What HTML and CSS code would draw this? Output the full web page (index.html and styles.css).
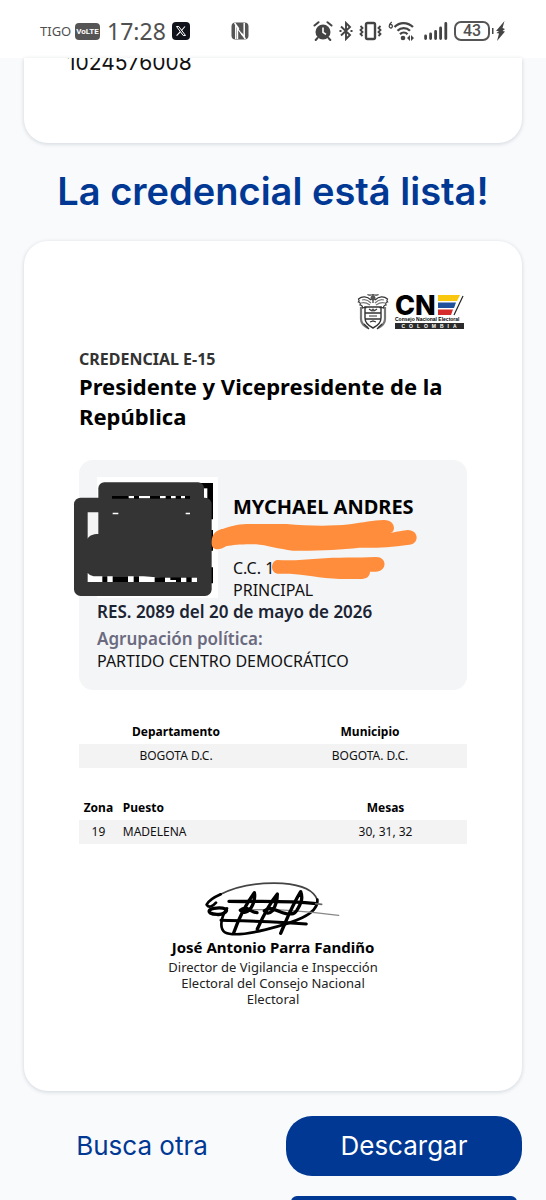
FILE: index.html
```html
<!DOCTYPE html>
<html lang="es">
<head>
<meta charset="utf-8">
<meta name="viewport" content="width=device-width, initial-scale=1">
<title>Credencial E-15</title>
<link rel="stylesheet" href="styles.css">
</head>
<body>
<div class="screen">
  <header class="status">
    <div class="status-left">
      <span class="carrier">TIGO</span>
      <span class="volte">VoLTE</span>
      <span class="clock">17:28</span>
      <svg class="app-x" width="18" height="18" viewBox="0 0 18 18"><rect width="18" height="18" rx="4" fill="#10141a"/><path d="M4.5 4.5h2.3l6.7 9h-2.3z" fill="none" stroke="#fff" stroke-width="1"/><path d="M13 4.5l-3.6 4M8.2 9.8l-3.6 3.8" stroke="#fff" stroke-width="1.1"/></svg>
      <svg width="18" height="18" viewBox="0 0 18 18"><rect x=".5" y=".5" width="17" height="17" rx="4" fill="#555"/><path d="M4.800 17V2.500M13.200 15.500V1M3.600 1l4.200 6M14.400 17l-4.200-6" fill="none" stroke="#fff" stroke-width="1.500"/><path d="M6.600 17V6.500l5 7" fill="none" stroke="#fff" stroke-width="1.200"/></svg>
    </div>
    <div class="status-right">
      <svg width="20" height="20" viewBox="0 0 20 20"><circle cx="10" cy="11" r="7.500" fill="#444"/><path d="M1.500 4.500l4-3.300M18.500 4.500l-4-3.300M4.500 17l-1.800 2M15.500 17l1.800 2" stroke="#444" stroke-width="2" stroke-linecap="round"/><path d="M10 6.500v4.800l3 2" fill="none" stroke="#fff" stroke-width="1.600"/></svg>
      <svg width="14" height="20" viewBox="0 0 14 20" fill="none" stroke="#444" stroke-width="1.900"><path d="M2 5.500l9 8.500-4 4V2l4 4-9 8.500"/><path d="M.5 10h2M11.500 10h2"/></svg>
      <svg width="23" height="20" viewBox="0 0 23 20" fill="none" stroke="#444" stroke-width="2.400"><rect x="7" y="2" width="9" height="16" rx="1.500"/><path d="M1.500 5l2 2-2 2 2 2-2 2 2 2M21.500 5l-2 2 2 2-2 2 2 2-2 2" stroke-width="1.800"/></svg>
      <svg width="27" height="20" viewBox="0 0 27 20" fill="none" stroke="#444" stroke-width="2.300"><path d="M3.700 1C1.800 2.500 1.200 4 1.200 5.500a1.600 1.800 0 1 0 .3-1.400" stroke-width="1.300"/><path d="M6.500 6c5-5.300 13-5.300 18.500 0M9.500 9.700c3.500-3.500 9-3.500 12.500 0M12 13.200c2.200-2 5.500-2 7.500 0"/><circle cx="15" cy="17" r="2.300" fill="#444" stroke="none"/><path d="M22 14v6l-3-3zM23 14v6l3-3z" fill="#444" stroke="none"/></svg>
      <svg class="signal" width="24" height="20" viewBox="0 0 24 20" stroke="#444" stroke-width="2.800" stroke-linecap="round"><path d="M1.600 15v2.500M6.600 13v4.500M11.600 10.500v7M16.600 7v10.500M21.800 2.500v15"/></svg>
      <span class="battery">43</span>
      <svg class="bolt" width="14" height="20" viewBox="0 0 14 20"><path d="M0 7h1.500v6H0z" fill="#444"/><path d="M12.500 0L4 10h3l-2.500 2L7 12.500 5 20l8-9.500-2.500-.5 2.500-2-2.500-1z" fill="#444"/></svg>
    </div>
  </header>

  <main class="page">
    <section class="card previous"><p class="document">1024576008</p></section>
    <h1 class="title">La credencial está lista!</h1>

    <article class="card credential">
      <svg class="logo" width="108" height="38" viewBox="0 0 108 38" role="img" aria-label="CNE">
        <g fill="none" stroke="#333" stroke-width="1.200">
          <path d="M16 1.500c-3 1-4 1-5.500 0M16 1.500c3 1 4 1 5.500 0M16 1v9" />
          <path d="M14 7C10 3 5 3 1.500 6c1 1.500 1 2 0 3 2 .5 2 1.500 1.500 3 2 0 2.500 1 2.500 3 2-1 3-1 4 0M18 7c4-4 9-4 12.500-1-1 1.500-1 2 0 3-2 .5-2 1.500-1.500 3-2 0-2.500 1-2.500 3-2-1-3-1-4 0"/>
          <path d="M5 7c3-1 6 0 9 3M4 10c3-1 6 0 9 2M27 7c-3-1-6 0-9 3M28 10c-3-1-6 0-9 2" stroke="#777"/>
          <path d="M8 14h16v11c0 5-4 8-8 10-4-2-8-5-8-10zM8 20h16M8 26h16" stroke-width="1.400"/>
          <path d="M4 14v12c0 4 3 7 7 9M28 14v12c0 4-3 7-7 9" stroke="#777" stroke-width="2.200"/>
          <path d="M12 16l3 2M20 16l-3 2M12 23h8M13 29l3-1 3 1M7 31l5 5M25 31l-5 5"/>
        </g>
        <circle cx="16" cy="5" r="2.500" fill="#555"/><circle cx="16" cy="17" r="1.500" fill="#555"/>
        <text class="logo-cn" x="38" y="22">CN</text>
        <path d="M81 2h22l-3 6H81z" fill="#f9c80e"/><path d="M81 9.500h18l-2 5.500H81z" fill="#20509c"/><path d="M81 16.500h15l-2 5.500H81z" fill="#d62b2b"/>
        <path d="M106 3l-9 19" stroke="#222" stroke-width="1.200"/>
        <text class="logo-name" x="38" y="28">Consejo Nacional Electoral</text>
        <rect x="38" y="30" width="69" height="6" fill="#2b2b2b"/>
        <text class="logo-country" x="74" y="35" text-anchor="middle">COLOMBIA</text>
      </svg>

      <p class="kind">CREDENCIAL E-15</p>
      <h2 class="office">Presidente y Vicepresidente de la República</h2>

      <section class="holder">
        <div class="identity">
          <div class="code"></div>
          <div class="person">
            <p class="name">MYCHAEL ANDRES</p>
            <p>C.C. 1</p>
            <p>PRINCIPAL</p>
          </div>
        </div>
        <p class="resolution">RES. 2089 del 20 de mayo de 2026</p>
        <p class="party-label">Agrupación política:</p>
        <p>PARTIDO CENTRO DEMOCRÁTICO</p>
        <svg class="strokes" width="389" height="231" viewBox="0 0 389 231" aria-hidden="true">
          <g transform="translate(-19 -10) scale(.33333)">
            <path d="M410 99h49v109h-8v32h8v62h-8v50h8v48h-30z" fill="#000"/>
            <path d="M431 115h11v30h-11z" fill="#fff"/>
            <rect x="115" y="97" width="317" height="200" rx="18" fill="#343434"/>
            <rect x="42" y="143" width="413" height="295" rx="20" fill="#343434"/>
            <path d="M83 187h32v65c-17 0-27 5-32 14z" fill="#f4f4f5"/>
            <path d="M156 138h234v8H156z" fill="#000"/>
            <path d="M206 138h16v7h-16zM237 138h33v7h-33zM300 138h17v7h-17zM333 138h14v7h-14zM363 138h12v7h-12zM158 188h17v5h-17zM377 188h13v5h-13z" fill="#fff"/>
            <path d="M83 369q7 9 18 10h150l55 4h105v13H83z" fill="#fff"/>
            <path d="M127 379h15v17h-15zM158 379h46v17h-46zM221 379h16v17h-16zM284 382h31v14h-31zM331 382h17v8h-17zM348 382h15v14h-15zM379 382h16v14h-16z" fill="#000"/>
          </g>
          <g transform="translate(121 -10) scale(.33333)" fill="#ff8d3b">
            <path d="M35 282C33 252 48 240 70 236c30-10 50-14 80-14h110c60 5 120 8 190 1 40-6 70-12 100-13 35-2 40 34 21 39 20-4 40-8 52-9 35 0 35 42 5 44-60 8-100 10-150 9-60 6-120 10-200 9-40-4-80-17-110-19-40-1-65 1-90 6-20 13-42 12-43-7z"/>
            <path d="M232 330c50 2 80-1 120-4 60-5 120-2 175-5 35-1 36 43 0 44h-17c0 14-10 22-30 22h-60c-60-3-110-14-150-16h-38c-22-4-20-38 0-41z"/>
          </g>
        </svg>
      </section>

      <table class="data place">
        <thead><tr><th>Departamento</th><th>Municipio</th></tr></thead>
        <tbody><tr><td>BOGOTA D.C.</td><td>BOGOTA. D.C.</td></tr></tbody>
      </table>

      <table class="data station">
        <thead><tr><th class="zone">Zona</th><th class="post">Puesto</th><th class="tables">Mesas</th></tr></thead>
        <tbody><tr><td>19</td><td class="post">MADELENA</td><td>30, 31, 32</td></tr></tbody>
      </table>

      <footer class="signer">
        <svg width="144" height="56" viewBox="156 36 432 168" fill="none" stroke="#000" stroke-linecap="round" stroke-linejoin="round">
          <path d="M215 76c50-26 120-36 186-33 60 5 95 22 104 50" stroke="#444" stroke-width="5"/>
          <path d="M215 76c-18 8-36 18-42 31M505 92c5 45-75 70-155 90-50 12-100 20-122 8-18-12-12-45 6-72M173 107c8 12 20 3 28-6" stroke-width="8"/>
          <path d="M184 132c-16-15 30-18 46-12 10 7-13 19-26 16-18 0-28-7-22-12" stroke-width="10"/>
          <path d="M240 97c80 2 160-4 262 7" stroke-width="10"/><path d="M500 104l18 2" stroke="#666" stroke-width="5"/>
          <path d="M216 154c90 2 160 3 256 11" stroke-width="9"/>
          <path d="M285 124c90-8 190 3 284 15" stroke="#888" stroke-width="4"/>
          <path d="M254 192c15-44 35-84 62-121 3 12 0 20-2 29-8 24-25 38-40 24 20-18 31 8 50 7M325 180c18-40 35-75 60-105 0 22-5 35-14 50-12 12-20 7-25 1 18-18 38 2 65 8M395 193c18-42 35-85 60-125 7 18 3 32-12 57-7 10-14 12-23 7" stroke-width="10"/>
        </svg>
        <p class="signer-name">José Antonio Parra Fandiño</p>
        <p class="signer-role">Director de Vigilancia e Inspección Electoral del Consejo Nacional Electoral</p>
      </footer>
    </article>

    <div class="actions">
      <button class="btn plain" type="button">Busca otra</button>
      <button class="btn primary" type="button">Descargar</button>
    </div>
    <div class="next-row"></div>
  </main>
</div>
</body>
</html>
```
FILE: styles.css
```css
* { box-sizing: border-box; }

body {
  margin: 0;
  background: #f8fafc;
  color: #111;
  font-family: "Noto Sans", "Open Sans", sans-serif;
  font-size: 16px;
  line-height: 22px;
}

p, h1, h2 { margin: 0; }
svg { display: block; flex: none; }

.screen { height: 100vh; overflow: hidden; }

.status {
  display: flex;
  justify-content: space-between;
  align-items: center;
  height: 58px;
  padding: 4px 40px 0 40px;
  background: #fff;
  color: #505050;
}
.status-left, .status-right { display: flex; align-items: center; }
.status-right { gap: 6px; }
.carrier { font-size: 13px; width: 35px; }
.volte {
  width: 25px;
  border-radius: 4px;
  background: #555;
  color: #fff;
  font: 700 8px/17px Roboto, sans-serif;
  text-align: center;
}
.clock { margin-left: 7px; width: 57px; font: 400 23px/26px "Noto Sans", sans-serif; white-space: nowrap; }
.app-x { margin-left: 8px; margin-right: 41px; }
.signal { margin-left: 3px; }
.battery {
  width: 36px;
  border: 2px solid #555;
  border-radius: 7px;
  font: 500 16px/16px Roboto, sans-serif;
  text-align: center;
}
.bolt { margin-left: -4px; }

.page { padding: 0 24px; }

.card {
  background: #fff;
  border-radius: 24px;
  box-shadow: 0 1px 4px rgba(15, 23, 42, .16);
}
.previous {
  height: 85px;
  padding: 0 43px;
  border-radius: 0 0 24px 24px;
  overflow: hidden;
}
.document {
  display: flex;
  align-items: flex-end;
  height: 17px;
  font: 400 21px/24px Inter, sans-serif;
}

.title {
  padding: 24px 0 26px;
  color: #003893;
  font: 600 38px/48px Inter, sans-serif;
  text-align: center;
  white-space: nowrap;
}

.credential { padding: 52px 55px 84px; }
.logo { margin: 0 2px 16px auto; }
.logo-cn { font: 800 27px Inter, sans-serif; }
.logo-name { font: 700 5px "Liberation Sans", sans-serif; }
.logo-country { fill: #fff; font: 700 5px "Liberation Sans", sans-serif; letter-spacing: 4px; }

.kind { color: #333; font-weight: 700; font-size: 16px; line-height: 24px; }
.office { font-size: 22px; line-height: 30px; font-weight: 700; color: #000; }

.holder {
  position: relative;
  margin-top: 29px;
  padding: 17px 17px 18px 18px;
  border-radius: 14px;
  background: #f4f5f7;
}
.identity { display: flex; align-items: flex-end; gap: 15px; height: 124px; }
.code { width: 121px; height: 121px; align-self: flex-start; background: #fff; }
.name { padding-bottom: 35px; font-weight: 700; font-size: 20px; line-height: 30px; color: #000; }
.resolution { color: #1b2433; font-size: 17px; font-weight: 600; }
.party-label { margin-top: 5px; color: #6b6b80; font-size: 17px; font-weight: 600; }
.strokes { position: absolute; left: 0; top: 0; overflow: visible; }

.data {
  width: 100%;
  border-collapse: collapse;
  table-layout: fixed;
  font-size: 12px;
  line-height: 24px;
  text-align: center;
}
.data th, .data td { padding: 0; }
.data th { color: #000; font-weight: 700; }
.data tbody { background: #f3f3f4; }
.place { margin-top: 30px; }
.station { margin-top: 28px; }
.zone { width: 10%; }
.tables { width: 42%; }
.data .post { padding-left: 5px; text-align: left; }

.signer { display: flex; flex-direction: column; align-items: center; margin-top: 37px; text-align: center; }
.signer-name { color: #000; font-weight: 700; font-size: 15px; line-height: 20px; }
.signer-role { max-width: 232px; padding-top: 2px; color: #222; font-size: 13px; line-height: 16px; }

.actions { display: grid; grid-template-columns: 236px 236px; justify-content: space-between; margin-top: 25px; }
.btn {
  height: 60px;
  border: 0;
  border-radius: 26px;
  font: 400 26px/36px Inter, sans-serif;
}
.plain { background: transparent; color: #003893; }
.primary { background: #003893; color: #fff; }
.next-row {
  width: 226px;
  height: 60px;
  margin: 20px 5px 0 auto;
  border-radius: 6px;
  background: #003893;
}
```
